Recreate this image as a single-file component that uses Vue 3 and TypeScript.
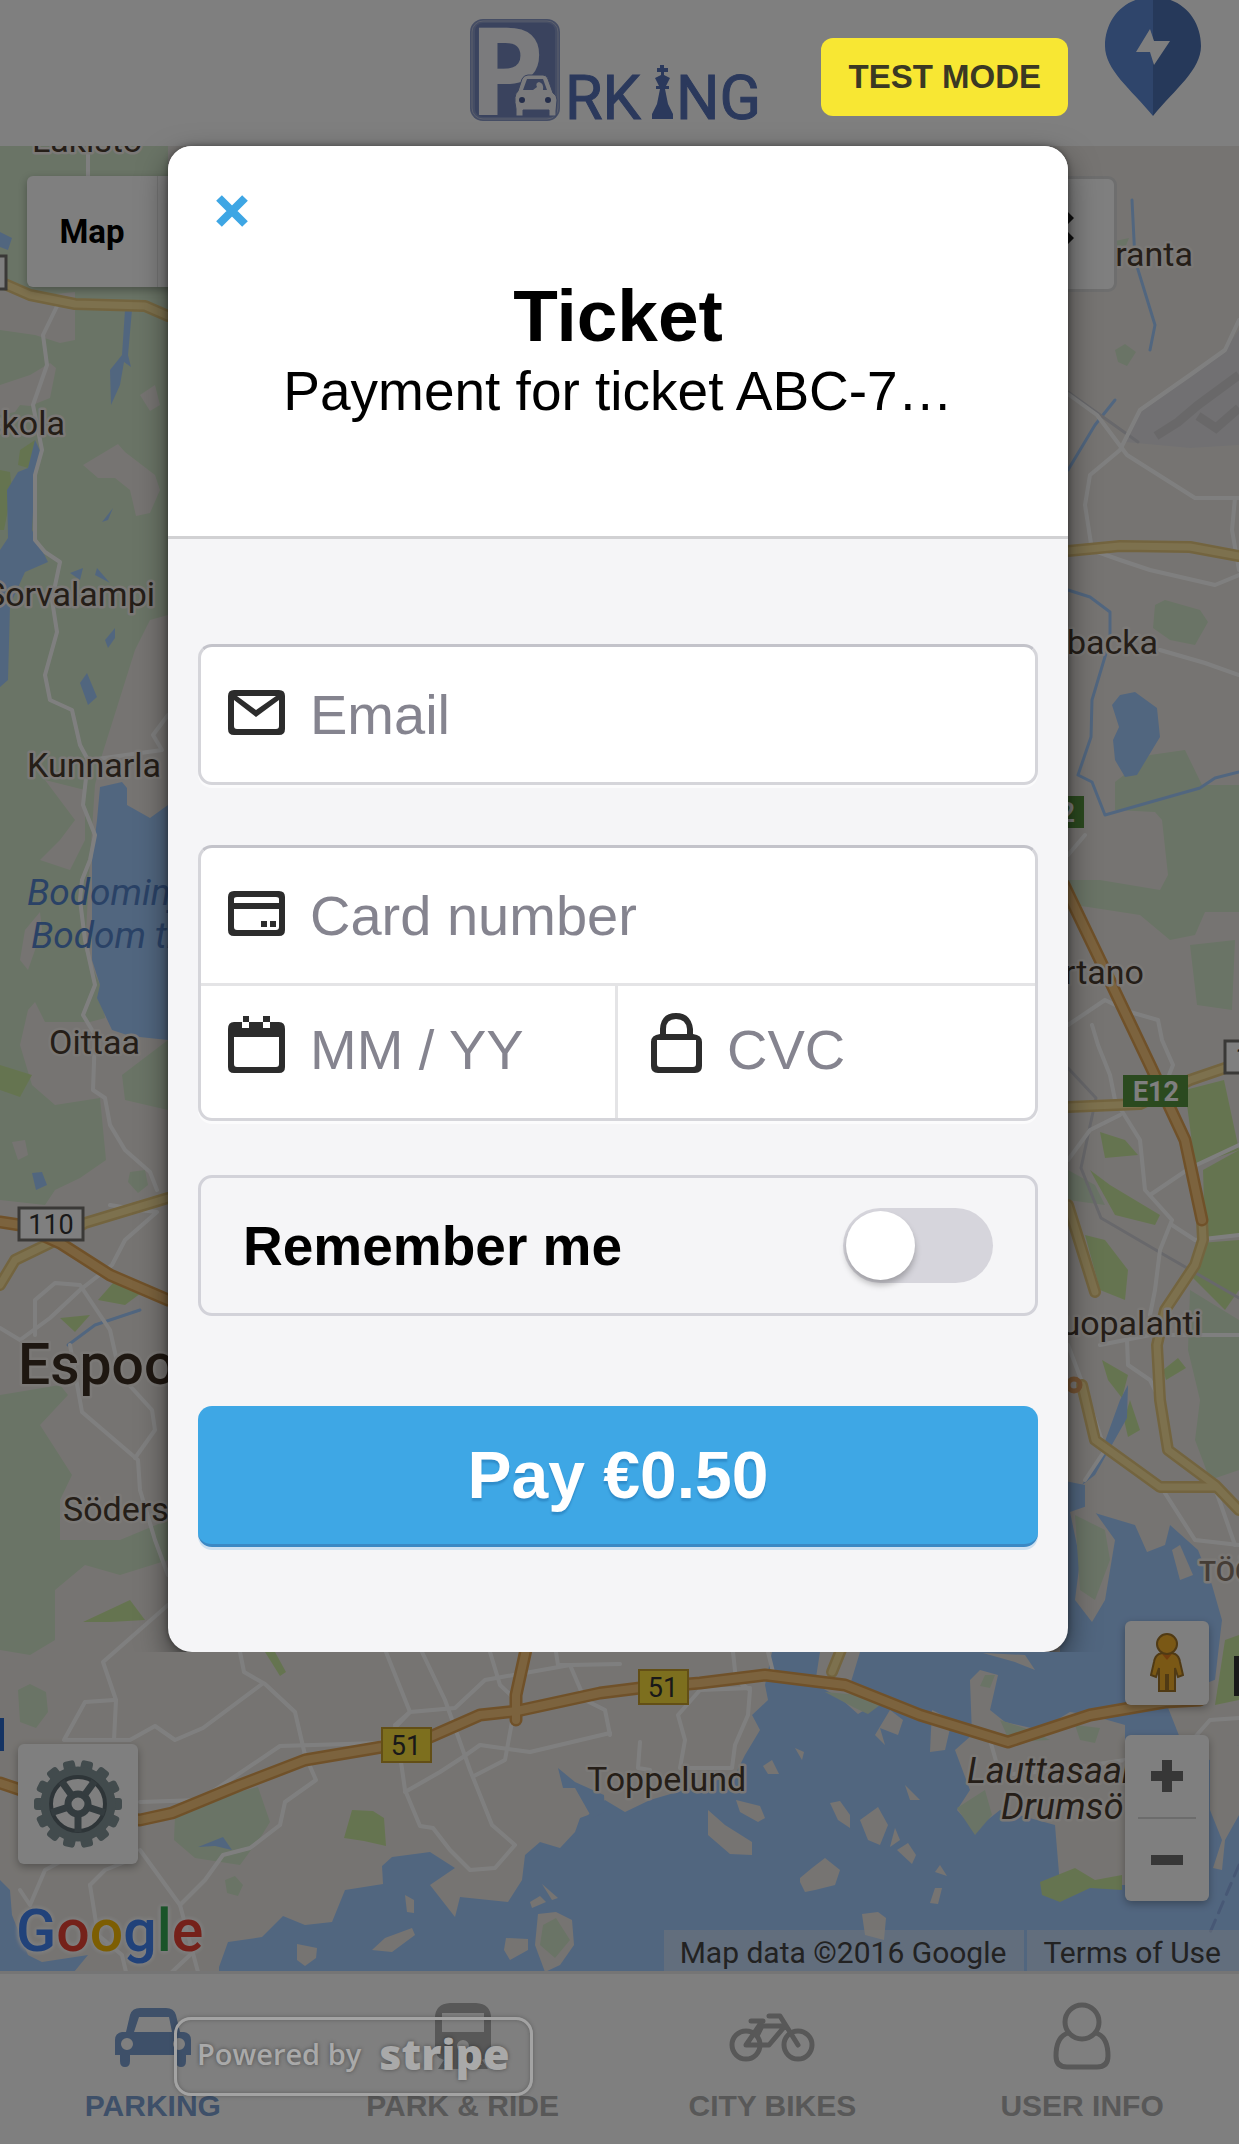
<script setup lang="ts">
import { ref } from 'vue'

interface Place {
  name: string
  x: number
  y: number
  kind?: 'town' | 'water' | 'city' | 'district' | 'area'
}

interface Tab {
  id: string
  label: string
}

const email = ref('')
const cardNumber = ref('')
const expiry = ref('')
const cvc = ref('')
const remember = ref(false)
const activeTab = ref('parking')

const tabs: Tab[] = [
  { id: 'parking', label: 'PARKING' },
  { id: 'ride', label: 'PARK & RIDE' },
  { id: 'bikes', label: 'CITY BIKES' },
  { id: 'user', label: 'USER INFO' },
]

const places: Place[] = [
  { name: 'Lakisto', x: 32, y: 152 },
  { name: 'Kunnarla', x: 27, y: 777 },
  { name: 'Bodominjärvi', x: 27, y: 905, kind: 'water' },
  { name: 'Bodom träsk', x: 31, y: 948, kind: 'water' },
  { name: 'Oittaa', x: 49, y: 1054 },
  { name: 'Espoo', x: 18, y: 1384, kind: 'city' },
  { name: 'Söderskog', x: 63, y: 1521 },
  { name: 'Toppelund', x: 587, y: 1791 },
  { name: 'Lauttasaari', x: 967, y: 1783, kind: 'area' },
  { name: 'Drumsö', x: 1001, y: 1819, kind: 'area' },
  { name: 'TÖÖLÖ', x: 1199, y: 1581, kind: 'district' },
]

const placesEnd: Place[] = [
  { name: 'Niskola', x: 65, y: 435 },
  { name: 'Sorvalampi', x: 155, y: 606 },
  { name: 'Seutula ranta', x: 1193, y: 266 },
  { name: 'Kivibacka', x: 1158, y: 654 },
  { name: 'Kaivartano', x: 1144, y: 984 },
  { name: 'Huopalahti', x: 1202, y: 1335 },
]

const woods: string[] = [
  '0,146 168,146 168,615 150,620 135,650 102,755 95,785 90,860 85,950 100,985 105,1018 90,1022 45,1022 35,1002 28,1010 20,1045 32,1085 55,1105 100,1098 106,1160 80,1178 55,1190 45,1205 0,1200',
  '122,1075 168,1040 168,1110 125,1100',
  '130,1172 145,1170 148,1185 138,1193 128,1182',
  '0,1395 60,1385 68,1395 40,1425 72,1475 60,1500 60,1540 120,1540 168,1520 168,1560 120,1575 85,1565 55,1590 55,1640 30,1655 0,1650',
  '18,1690 30,1684 46,1692 48,1712 36,1728 20,1722',
  '175,1815 205,1800 258,1787 270,1822 262,1835 240,1865 195,1858 174,1840',
  '225,1880 235,1876 243,1885 238,1896 227,1893',
  '1115,350 1125,344 1136,352 1127,366 1118,362',
  '1092,246 1129,238 1125,248 1115,248',
  '1155,605 1165,600 1200,610 1208,622 1195,645 1170,640 1153,628',
  '1115,782 1150,755 1185,750 1202,785 1239,785 1239,912 1205,912 1195,935 1170,940 1140,915 1075,905 1065,880 1100,880 1160,890 1168,875 1162,820 1155,812 1115,810',
  '1190,945 1235,940 1232,1010 1197,1005',
  '1068,1170 1095,1185 1105,1205 1068,1200',
  '1190,1290 1239,1320 1239,1470 1210,1480 1195,1440 1200,1400 1188,1350',
]

const parks: string[] = [
  '20,450 35,440 36,452 28,468 18,465',
  '0,470 10,472 12,490 4,530 0,530',
  '0,1065 32,1075 20,1097 0,1090',
  '98,1300 120,1275 145,1290 125,1305',
  '60,1318 90,1315 75,1332',
  '83,1622 130,1600 145,1620 110,1622',
  '265,1652 275,1652 286,1672 280,1676',
  '352,1810 373,1811 384,1818 386,1846 364,1841 344,1838',
  '1185,1090 1224,1080 1239,1150 1195,1165',
  '1203,1170 1239,1150 1239,1235 1205,1238',
  '1200,1243 1239,1240 1239,1290 1225,1310 1190,1275',
  '1090,1170 1110,1185 1160,1215 1155,1225 1115,1215',
  '1100,1132 1125,1140 1138,1155 1105,1158',
  '1085,1235 1105,1240 1128,1270 1125,1300 1100,1290',
  '1102,1360 1128,1375 1122,1398 1108,1380',
  '1130,1400 1140,1430 1128,1437 1124,1420',
  '1163,1370 1178,1358 1186,1368 1166,1380',
]

const clearings: string[] = [
  '0,290 45,295 75,292 75,340 60,343 35,335 0,330',
  '0,385 30,375 50,363 56,368 50,398 30,406 20,405 15,412 0,415',
  '83,465 118,444 125,452 155,475 160,490 150,513 136,516 130,490 115,478 98,478',
  '140,395 155,385 160,405 150,411',
  '45,780 85,790 85,840 70,870 40,860 60,840 75,820',
  '20,960 25,930 40,912 42,930 28,970',
  '12,1142 25,1140 28,1155 18,1160',
]

const waters: string[] = [
  '35,440 42,455 35,475 32,530 48,562 25,572 10,605 8,680 0,687 0,550 8,538 7,490 18,472 28,468',
  '125,310 132,310 128,355 131,367 124,362 120,385 111,405 110,370 122,355',
  '0,232 12,238 8,250 0,247',
  '102,522 113,508 108,520',
  '70,573 83,568 80,580',
  '95,575 97,568 110,583',
  '105,640 115,628 115,638 108,648',
  '80,683 87,673 97,697 88,705',
  '100,787 122,782 127,788 127,805 150,818 168,805 168,1040 130,1036 112,1030 105,1015 97,998 100,985 92,960 92,860 97,820',
  '32,1173 42,1172 47,1185 36,1190',
  '1112,705 1120,695 1135,692 1157,708 1160,737 1137,775 1125,777 1115,760 1113,740 1119,727',
  '198,1847 223,1837 232,1850 215,1846',
  '0,1880 10,1890 12,1915 28,1955 42,1962 88,1955 74,1972 0,1972',
  '1120,1400 1128,1385 1127,1418 1095,1475 1082,1485 1100,1455',
  '219,1967 228,1942 262,1937 283,1916 305,1925 332,1922 345,1890 383,1884 382,1866 392,1857 430,1852 455,1868 430,1885 455,1917 460,1897 508,1902 522,1880 525,1855 540,1842 560,1848 575,1832 580,1818 588,1815 605,1800 625,1812 650,1800 735,1775 745,1755 760,1730 752,1715 768,1700 765,1685 772,1652 820,1652 1060,1652 1060,1480 1085,1485 1085,1510 1135,1525 1147,1552 1165,1545 1170,1525 1198,1550 1212,1585 1222,1620 1215,1680 1180,1735 1165,1745 1210,1760 1239,1740 1239,1972 219,1972',
  '558,1768 575,1782 604,1795 605,1812 592,1818 575,1788 563,1788',
]

const islands: string[] = [
  '970,1680 980,1670 998,1675 990,1710 1005,1722 1040,1730 1070,1712 1090,1715 1125,1725 1125,1885 1060,1885 1055,1825 1000,1810 975,1830 957,1810 970,1790 955,1750 972,1735',
  '820,1652 860,1652 850,1685 868,1708 858,1714 840,1698 815,1684',
  '890,1710 903,1720 898,1735 880,1728 885,1745 875,1735',
  '932,1710 952,1720 945,1750 930,1752',
  '708,1810 725,1825 752,1842 752,1855 730,1854 708,1835',
  '736,1800 760,1806 765,1818 758,1822 740,1812',
  '763,1766 772,1760 779,1774 768,1774',
  '795,1748 804,1752 802,1760',
  '830,1803 840,1801 850,1815 850,1828 838,1820',
  '860,1820 878,1807 888,1825 880,1845 868,1840',
  '895,1828 900,1840 890,1847',
  '905,1785 920,1800 910,1800',
  '897,1850 908,1843 916,1855 912,1864',
  '800,1878 812,1868 825,1858 840,1870 835,1885 815,1890 805,1892 800,1882',
  '935,1872 940,1865 947,1876',
  '935,1888 942,1888 938,1904 930,1903',
  '862,1914 878,1912 886,1918 884,1940 865,1935',
  '405,1895 414,1900 414,1913 407,1912',
  '372,1950 385,1938 412,1928 415,1935 392,1952',
  '297,1944 317,1948 316,1958 305,1966 297,1960',
  '538,1914 556,1912 572,1920 574,1945 560,1965 545,1972 535,1945',
  '506,1938 528,1939 528,1950 510,1960 504,1950',
  '542,1884 558,1898 552,1900',
  '530,1902 540,1896 546,1902 532,1908',
  '983,1653 1025,1655 1035,1670 1015,1662',
  '1070,1512 1090,1505 1115,1540 1105,1600 1092,1622 1075,1600 1080,1560',
  '1172,1550 1180,1545 1193,1575 1180,1580',
  '1165,1700 1239,1670 1239,1745 1215,1755 1180,1738',
  '1225,1840 1239,1815 1239,1745 1210,1752 1210,1810 1222,1840 1213,1868 1222,1870',
]

const islandWoods: string[] = [
  '543,1925 556,1918 570,1940 555,1958 540,1945',
  '957,1808 985,1790 992,1815 975,1835',
  '985,1675 995,1675 990,1688 980,1686',
  '1000,1720 1030,1730 1050,1740 1010,1742',
  '1075,1725 1100,1728 1095,1743 1080,1740',
  '1075,1515 1105,1530 1110,1560 1095,1600 1080,1590',
  '825,1692 860,1695 880,1705 868,1714 855,1708',
]

const islandParks: string[] = [
  '1040,1882 1075,1868 1095,1880 1122,1875 1122,1890 1090,1888 1060,1902 1042,1895',
  '1225,1640 1239,1635 1239,1700 1215,1705',
]

const smallRoads: string[] = [
  '88,146 88,180',
  '60,300 43,335 47,365 33,405 42,450 35,475 35,540 45,552 60,562 52,600 57,632 45,675 50,700 72,710 80,745 88,760 83,805 95,835 90,860 82,880 80,900 85,940 95,985 83,1015 95,1035 93,1090 105,1098 110,1125 125,1150 150,1172 157,1190',
  '168,715 153,735 162,750 90,760',
  '35,1335 35,1300 55,1283 80,1285 110,1330 120,1375 152,1410 155,1430 135,1458',
  '0,1328 20,1340 50,1318 80,1290 112,1265 125,1240 157,1212 140,1210 110,1205',
  '70,1345 82,1412 138,1460 140,1490 155,1540 168,1575',
  '168,1605 103,1662 116,1700 114,1740',
  '114,1700 85,1702 64,1740 110,1740 130,1740 155,1726 175,1740 203,1728 262,1684',
  '240,1652 244,1672 265,1684 295,1712 305,1755 316,1780 285,1802 280,1825 250,1848 223,1855 205,1880 180,1905 140,1850',
  '140,1802 200,1800 280,1746 380,1743 410,1712 455,1708 485,1680 570,1665 620,1664',
  '386,1652 410,1712 395,1725',
  '422,1652 445,1700 470,1770 492,1825 515,1845 495,1868 470,1870 450,1850 433,1828 420,1826 405,1790 401,1762',
  '405,1792 440,1772 463,1757 480,1745 530,1752 610,1733',
  '490,1652 500,1685 516,1700 505,1760 474,1776',
  '556,1652 558,1665 570,1665 585,1700 605,1710 610,1735',
  '20,1890 30,1905 45,1870 60,1862',
  '90,1885 105,1870 135,1858',
  '90,1885 98,1935 122,1955 126,1972',
  '180,1905 198,1972',
  '190,1955 172,1972',
  '733,1652 736,1680 750,1690 748,1715 735,1745 732,1768 680,1768 685,1740 678,1715 700,1690 750,1688',
  '640,1742 638,1768 650,1770',
  '768,1652 773,1672',
  '1068,394 1097,415 1127,455 1195,498 1239,498',
  '1239,320 1225,350 1190,375 1140,410 1120,450 1090,475 1085,505 1092,550 1120,560 1150,570 1215,585 1239,575',
  '1235,498 1232,530 1239,570',
  '1160,650 1205,663 1239,675',
  '1068,855 1085,835',
  '1068,1025 1105,1000 1130,1012 1158,1020 1162,1040 1173,1065 1165,1085',
  '1092,1025 1098,1045 1110,1075 1115,1100 1140,1140 1145,1190 1172,1220 1160,1250 1155,1290 1150,1315',
  '1068,1160 1090,1130 1120,1115',
  '1150,1195 1190,1168 1239,1145',
  '1172,1225 1195,1240 1239,1235',
  '1100,1345 1150,1335 1239,1335',
  '1068,1345 1085,1390 1105,1450 1085,1480',
  '1127,1340 1128,1365 1150,1380 1160,1400',
  '1163,1490 1195,1540 1239,1545',
  '1215,1488 1235,1545',
  '1188,1745 1210,1720 1239,1718',
  '990,1740 1000,1775 1060,1770 1125,1760',
]

const yellowRoads: string[] = [
  '0,282 30,295 75,304 145,306 168,316',
  '0,1285 15,1260 50,1243 85,1223 168,1198',
  '1068,551 1120,546 1190,547 1239,556',
  '1068,1107 1140,1104 1190,1080 1228,1067',
  '1068,1205 1095,1292',
  '1202,1220 1203,1240 1195,1265 1165,1310 1157,1345 1160,1400 1168,1450 1215,1485 1239,1510',
  '1082,1385 1095,1440 1160,1487 1215,1487',
  '845,1640 832,1672',
]

const orangeRoads: string[] = [
  '0,1222 20,1225 60,1243 110,1275 168,1300',
  '0,1783 30,1793 80,1815 140,1820 172,1813 240,1785 305,1760 382,1747 430,1737 480,1715 517,1711 600,1693 640,1688 700,1683 765,1675 845,1685 920,1715 1008,1742 1090,1715 1165,1702 1200,1700',
  '1064,885 1100,960 1150,1065 1185,1140 1202,1220',
  '527,1645 516,1695 516,1720',
]

const streams: string[] = [
  '1068,590 1090,597 1110,612 1110,640 1092,700 1091,737 1078,775 1092,782 1105,815 1140,805 1200,788 1215,778 1239,772',
  '1132,200 1135,260 1155,325 1150,350',
  '1068,470 1095,425 1115,400',
  '68,1345 95,1325 140,1310',
]
</script>

<template>
  <div class="page">
    <header class="top">
      <svg class="logo" viewBox="0 0 290 104" role="img" aria-label="Parking">
        <rect x="1" y="1" width="90" height="102" rx="13" fill="#8a9ac8" />
        <rect x="3" y="3" width="86" height="98" rx="11" fill="none" stroke="#b8c0da" stroke-width="1" />
        <rect x="6" y="5" width="80" height="94" rx="8" fill="#7486bd" />
        <text x="-1" y="97" class="sign-letter">P</text>
        <path d="M53 61q2-4 6-4h15q4 0 5 4l5 14q4 2 4 7l-1 11v5h-7v-6H54v6h-7v-7q-3-14 2-18z" fill="#f6f7fb" stroke="#7486bd" stroke-width="1" />
        <path d="M54 72l4-11h16l4 11h-4q1-7-4-8-4 1-2 5l-4 3z" fill="#7486bd" />
        <circle cx="53" cy="82" r="3" fill="#4a5c96" />
        <circle cx="79" cy="82" r="3" fill="#4a5c96" />
        <text x="96" y="101" class="logo-text">RK</text>
        <path d="M191 47h4v3h4v4h-4v3l6 3-4 8h3v3h-4l3 15 5 10v5h-21v-5l5-10 3-15h-4v-3h3l-4-8 6-3v-3h-4v-4h3z" fill="#5672b8" />
        <text x="207" y="101" class="logo-text">NG</text>
      </svg>
      <svg class="pin" viewBox="0 0 98 116" aria-hidden="true">
        <path d="M49-3C20-3 1 19 1 46c0 24 26 43 48 70z" fill="#5e8ad6" />
        <path d="M49-3c29 0 48 22 48 49 0 24-26 43-48 70z" fill="#4c72b4" />
        <path d="M46 29L32 52h14l4 13 16-24H50z" fill="#fff" />
      </svg>
    </header>

    <main class="map">
      <svg class="canvas" viewBox="0 146 1239 1825" preserveAspectRatio="xMidYMid slice" aria-label="Map">
        <rect x="0" y="146" width="1239" height="1826" fill="#ede9e4" />
        <polygon v-for="p in woods" :key="p" :points="p" fill="#d4e8cc" />
        <polygon v-for="p in clearings" :key="p" :points="p" fill="#ede9e4" />
        <polygon v-for="p in parks" :key="p" :points="p" fill="#cbe8a0" />
        <polygon points="1125,442 1140,410 1190,377 1225,350 1239,330 1239,445 1190,448" fill="#e2e1e4" />
        <path d="M1156 436l22-14 20-17 41-30M1198 416l18 12 23-20" fill="none" stroke="#d3d0d3" stroke-width="9" />
        <polygon v-for="p in waters" :key="p" :points="p" fill="#a3ccff" />
        <polygon v-for="p in islands" :key="p" :points="p" fill="#ede9e4" />
        <polygon v-for="p in islandWoods" :key="p" :points="p" fill="#d4e8cc" />
        <polygon v-for="p in islandParks" :key="p" :points="p" fill="#cbe8a0" />
        <g fill="none" stroke-linejoin="round" stroke-linecap="round">
          <polyline v-for="p in streams" :key="p" :points="p" stroke="#a3ccff" stroke-width="3" />
          <path d="M1068 1068l28 30-15 70 20 50 60 35 78 45M1068 392l70 50" stroke="#d0d0d6" stroke-width="3" />
          <polyline v-for="p in smallRoads" :key="p" :points="p" stroke="#fff" stroke-width="4" />
          <polyline v-for="p in yellowRoads" :key="p" :points="p" stroke="#e6c97e" stroke-width="12" />
          <polyline v-for="p in yellowRoads" :key="p + 'in'" :points="p" stroke="#fbe29c" stroke-width="7" />
          <polyline v-for="p in orangeRoads" :key="p" :points="p" stroke="#e0a353" stroke-width="13" />
          <polyline v-for="p in orangeRoads" :key="p + 'in'" :points="p" stroke="#f8c77c" stroke-width="8" />
          <circle cx="1074" cy="1385" r="6" stroke="#e9a667" stroke-width="5" />
          <path d="M1239 1865l-30 70" stroke="#8fb0ea" stroke-width="3" stroke-dasharray="12 8" />
        </g>
        <g class="shields">
          <rect x="19" y="1208" width="64" height="32" fill="#fff" stroke="#75736f" stroke-width="3" />
          <text x="51" y="1234">110</text>
          <rect x="-20" y="256" width="26" height="33" fill="#fff" stroke="#75736f" stroke-width="3" />
          <rect x="1225" y="1041" width="60" height="32" fill="#fff" stroke="#75736f" stroke-width="3" />
          <text x="1243" y="1067">1</text>
          <rect x="382" y="1728" width="49" height="34" fill="#fbdf3c" stroke="#c79f2c" stroke-width="2" />
          <text x="406" y="1755">51</text>
          <rect x="639" y="1670" width="49" height="34" fill="#fbdf3c" stroke="#c79f2c" stroke-width="2" />
          <text x="663" y="1697">51</text>
          <rect x="1020" y="796" width="64" height="32" fill="#56943e" />
          <text x="1052" y="822" class="light">E12</text>
          <rect x="1123" y="1075" width="65" height="32" fill="#56943e" />
          <text x="1156" y="1101" class="light">E12</text>
          <rect x="-10" y="1718" width="14" height="33" fill="#2a68c8" />
          <rect x="1234" y="1656" width="8" height="40" fill="#333" />
        </g>
        <text v-for="p in places" :key="p.name" :x="p.x" :y="p.y" class="place" :class="p.kind">{{ p.name }}</text>
        <text v-for="p in placesEnd" :key="p.name" :x="p.x" :y="p.y" class="place end">{{ p.name }}</text>
      </svg>

      <div class="map-bar">
        <div class="map-types">
          <button type="button" class="active">Map</button>
          <button type="button">Satellite</button>
        </div>
        <div class="area-select">
          <select aria-label="Area">
            <option>Helsinki</option>
          </select>
          <svg width="30" height="40" viewBox="0 0 30 40" aria-hidden="true">
            <path d="M15-11L30 4l-6 6H6L0 4zM6 18h18l6 6-15 15L0 24z" fill="#222" />
          </svg>
        </div>
      </div>

      <div class="map-controls">
        <button type="button" aria-label="Street view" class="ctl pegman">
          <svg width="34" height="60" viewBox="0 0 34 60" aria-hidden="true">
            <path d="M9 21q8-3 16 0 4 2 5 8l3 13-5 2-3-9v23h-7V42h-2v16H9V35l-3 9-5-2 3-13q1-6 5-8z" fill="#f5b02a" stroke="#a07428" stroke-width="2" />
            <path d="M12 21h10l-5 6z" fill="#e57a1c" />
            <circle cx="17" cy="11" r="10" fill="#f5b02a" stroke="#a07428" stroke-width="2" />
          </svg>
        </button>
        <div class="zoom">
          <button type="button" aria-label="Zoom in" class="ctl">
            <svg width="32" height="32" viewBox="0 0 32 32" aria-hidden="true"><path d="M11 0h10v11h11v10H21v11H11V21H0V11h11z" fill="#6e6e6e" /></svg>
          </button>
          <hr />
          <button type="button" aria-label="Zoom out" class="ctl">
            <svg width="32" height="32" viewBox="0 0 32 32" aria-hidden="true"><path d="M0 11h32v10H0z" fill="#6e6e6e" /></svg>
          </button>
        </div>
      </div>

      <button type="button" class="settings" aria-label="Settings">
        <svg width="90" height="90" viewBox="-45 -45 90 90" aria-hidden="true">
          <g fill="#84969a">
            <rect v-for="n in 14" :key="n" x="-6" y="-44" width="12" height="14" rx="3" :transform="`rotate(${(n - 0.5) * 360 / 14})`" />
          </g>
          <circle r="32" fill="none" stroke="#84969a" stroke-width="11" />
          <circle r="27" fill="none" stroke="#5c6a70" stroke-width="4" />
          <circle r="10" fill="none" stroke="#68787e" stroke-width="7" />
          <path v-for="n in 5" :key="n" d="M0 11V28" stroke="#68787e" stroke-width="7" :transform="`rotate(${n * 72})`" />
        </svg>
      </button>

      <div class="google" aria-label="Google">
        <span class="b">G</span><span class="r">o</span><span class="y">o</span><span class="b">g</span><span class="g">l</span><span class="r">e</span>
      </div>

      <div class="credits">
        <span>Map data ©2016 Google</span>
        <a href="#terms">Terms of Use</a>
      </div>
    </main>

    <nav class="tabs">
      <a v-for="t in tabs" :key="t.id" :href="'#' + t.id" :class="{ active: activeTab === t.id }" @click="activeTab = t.id">
        <svg v-if="t.id === 'parking'" width="76" height="68" viewBox="0 0 76 68" aria-hidden="true">
          <path fill-rule="evenodd" d="M25 6h26q8 0 10 7l4 17h4q7 1 7 8v15h-5v6q0 6-5 6t-5-6v-6H15v6q0 6-5 6t-5-6v-6H0V38q0-7 7-8h4l4-17q2-7 10-7zm-1 9l-5 15h38l-3-15zM12 36a6 6 0 1 0 0 12 6 6 0 0 0 0-12zm52 0a6 6 0 1 0 0 12 6 6 0 0 0 0-12z" fill="currentColor" />
        </svg>
        <svg v-else-if="t.id === 'ride'" width="58" height="68" viewBox="0 0 58 68" aria-hidden="true">
          <path fill-rule="evenodd" d="M16 1h26q15 1 15 15v28q0 12-9 14l6 9H4l6-9q-9-2-9-14V16Q1 2 16 1zM8 11v19h42V11zm21 27a6 6 0 1 0 0 12 6 6 0 0 0 0-12zM14 58l-4 5h8l-2-5zm28 0l-2 5h8l-4-5z" fill="currentColor" />
        </svg>
        <svg v-else-if="t.id === 'bikes'" width="86" height="68" viewBox="0 0 86 68" aria-hidden="true">
          <g fill="none" stroke="currentColor" stroke-width="5" stroke-linecap="round" stroke-linejoin="round">
            <circle cx="17" cy="43" r="14" />
            <circle cx="69" cy="43" r="14" />
            <path d="M22 19h12M40 14h11l18 29M30 24h26L40 43H17l15-22M32 26l-4 8" />
          </g>
        </svg>
        <svg v-else width="58" height="68" viewBox="0 0 58 68" aria-hidden="true">
          <g fill="none" stroke="currentColor" stroke-width="5">
            <ellipse cx="29" cy="20" rx="17" ry="17" />
            <path d="M15 31Q3 35 3 54q0 11 11 11h30q11 0 11-11 0-19-12-23" />
          </g>
        </svg>
        <span>{{ t.label }}</span>
      </a>
    </nav>

    <div class="overlay">
      <span class="test-mode">TEST MODE</span>
      <form class="dialog" role="dialog" aria-labelledby="dialog-title" @submit.prevent>
        <header class="dialog-head">
          <button type="button" class="close" aria-label="Close">
            <svg width="34" height="34" viewBox="0 0 34 34" aria-hidden="true">
              <path d="M4 4l26 26M30 4L4 30" stroke="#3ea6e4" stroke-width="8" />
            </svg>
          </button>
          <h1 id="dialog-title">Ticket</h1>
          <p>Payment for ticket ABC-7…</p>
        </header>

        <div class="dialog-body">
          <label class="field box">
            <svg class="icon" viewBox="0 0 57 80" aria-hidden="true">
              <path fill-rule="evenodd" d="M6 15h45q6 0 6 6v33q0 6-6 6H6q-6 0-6-6V21q0-6 6-6zm3 6l19 14 20-14zM6 25v26q0 3 3 3h39q3 0 3-3V25L28 42z" fill="#2c2c2c" />
            </svg>
            <input v-model="email" type="email" placeholder="Email" aria-label="Email" />
          </label>

          <div class="card box">
            <label class="field">
              <svg class="icon" viewBox="0 0 57 80" aria-hidden="true">
                <path fill-rule="evenodd" d="M6 15h45q6 0 6 6v33q0 6-6 6H6q-6 0-6-6V21q0-6 6-6zm3 6q-3 0-3 2v4h45v-4q0-2-3-2zM6 33v18q0 3 3 3h39q3 0 3-3V33z" fill="#2c2c2c" />
                <path d="M33 45h6v6h-6zm9 0h6v6h-6z" fill="#2c2c2c" />
              </svg>
              <input v-model="cardNumber" type="text" inputmode="numeric" placeholder="Card number" aria-label="Card number" />
            </label>
            <div class="card-row">
              <label class="field">
                <svg class="icon" viewBox="0 -3 57 80" aria-hidden="true">
                  <path fill-rule="evenodd" d="M6 9h8v6h7V9h14v6h7V9h9q6 0 6 7v38q0 6-6 6H6q-6 0-6-6V16q0-7 6-7zm0 15v27q0 3 3 3h39q3 0 3-3V24z" fill="#2c2c2c" />
                  <path d="M15 3h6v6h-6zm20 0h7v6h-7z" fill="#2c2c2c" />
                </svg>
                <input v-model="expiry" type="text" inputmode="numeric" placeholder="MM / YY" aria-label="Expiry date" />
              </label>
              <label class="field">
                <svg class="icon" viewBox="0 -3 57 80" aria-hidden="true">
                  <path fill-rule="evenodd" d="M15 21v-5Q16 0 31 0t17 16v5q9 1 9 8v24q0 7-7 7H13q-7 0-7-7V29q0-7 9-8zm6 0h21v-5q-1-10-11-10t-10 10zM12 27v24q0 3 3 3h33q3 0 3-3V27z" fill="#2c2c2c" />
                </svg>
                <input v-model="cvc" type="text" inputmode="numeric" placeholder="CVC" aria-label="CVC" />
              </label>
            </div>
          </div>

          <label class="remember">
            <span>Remember me</span>
            <input v-model="remember" type="checkbox" />
          </label>

          <button type="submit" class="pay">Pay €0.50</button>
        </div>
      </form>

      <a class="powered" href="#stripe">Powered by <strong>stripe</strong></a>
    </div>
  </div>
</template>

<style>
body {
  margin: 0;
}
</style>

<style scoped>
* {
  box-sizing: border-box;
}

.page {
  position: relative;
  display: flex;
  flex-direction: column;
  min-height: 100vh;
  overflow: hidden;
  background: #fff;
  font-family: "Liberation Sans", Arial, sans-serif;
}

button {
  margin: 0;
  padding: 0;
  border: 0;
  font-family: inherit;
  cursor: pointer;
}

.top {
  position: relative;
  display: flex;
  justify-content: center;
  height: 146px;
  padding: 18px 12px 0 0;
}

.logo {
  width: 290px;
  height: 104px;
  overflow: visible;
}

.sign-letter {
  font: 700 122px "Open Sans", sans-serif;
  fill: #f6f7fb;
}

.logo-text {
  font: 400 61px Roboto, sans-serif;
  fill: #5672b8;
  stroke: #5672b8;
  stroke-width: 1;
}

.pin {
  position: absolute;
  top: 0;
  right: 37px;
  width: 98px;
  height: 116px;
}

.map {
  position: relative;
  flex: 1;
  display: flex;
  flex-direction: column;
  font-family: Roboto, sans-serif;
}

.canvas {
  position: absolute;
  inset: 0;
  width: 100%;
  height: 100%;
}

.place {
  font: 400 34px Roboto, sans-serif;
  fill: #4a3c30;
  stroke: #f6f2ee;
  stroke-width: 5;
  stroke-linejoin: round;
  paint-order: stroke;
}

.place.end {
  text-anchor: end;
}

.place.water {
  font-style: italic;
  font-size: 37px;
  fill: #5585cc;
  stroke: none;
}

.place.city {
  font-size: 57px;
  font-weight: 500;
  fill: #3c2f22;
}

.place.district {
  font-size: 28px;
  font-weight: 500;
  fill: #8a7a6c;
}

.place.area {
  font-size: 36px;
  font-style: italic;
}

.shields text {
  font: 400 27px Roboto, sans-serif;
  text-anchor: middle;
  fill: #333;
}

.shields .light {
  font-weight: 700;
  fill: #fff;
}

.map-bar {
  position: relative;
  display: flex;
  justify-content: space-between;
  margin: 30px 122px 0 27px;
}

.map-types {
  display: flex;
  height: 111px;
  border-radius: 6px;
  background: #fff;
  box-shadow: 0 3px 9px rgba(0, 0, 0, 0.3);
}

.map-types button {
  width: 130px;
  background: none;
  font-size: 33px;
  color: #565656;
}

.map-types button + button {
  width: 180px;
  border-left: 1px solid #e6e6e6;
}

.map-types .active {
  font-weight: 700;
  color: #000;
}

.area-select {
  display: flex;
  align-items: center;
  width: 400px;
  height: 116px;
  padding-right: 40px;
  border: 3px solid #dcdcdc;
  border-radius: 9px;
  background: #fff;
}

.area-select svg {
  overflow: visible;
}

.area-select select {
  flex: 1;
  padding: 0 24px;
  border: 0;
  appearance: none;
  background: none;
  font: 32px Roboto, sans-serif;
}

.map-controls {
  position: absolute;
  right: 30px;
  bottom: 70px;
  display: flex;
  flex-direction: column;
  gap: 30px;
  width: 84px;
}

.ctl {
  display: flex;
  align-items: center;
  justify-content: center;
  width: 100%;
  height: 82px;
  background: none;
}

.pegman,
.zoom,
.settings {
  border-radius: 6px;
  background: #fff;
  box-shadow: 0 3px 9px rgba(0, 0, 0, 0.3);
}

.pegman {
  height: 84px;
}

.zoom hr {
  height: 2px;
  margin: 0 13px;
  border: 0;
  background: #d8d8d8;
}

.settings {
  position: absolute;
  left: 18px;
  bottom: 107px;
  display: flex;
  align-items: center;
  justify-content: center;
  width: 120px;
  height: 120px;
}

.google {
  position: absolute;
  left: 16px;
  bottom: 0;
  display: flex;
  font-size: 59px;
  font-weight: 500;
  line-height: 80px;
  text-shadow: 0 0 5px #fff, 0 0 5px #fff, 0 0 5px #fff;
}

.google .b {
  color: #4285f4;
}

.google .r {
  color: #ea4335;
}

.google .y {
  color: #fbbc05;
}

.google .g {
  color: #34a853;
}

.credits {
  position: absolute;
  right: 0;
  bottom: 0;
  display: flex;
  gap: 3px;
  font-size: 30px;
  line-height: 37px;
  color: #444;
}

.credits > * {
  padding: 4px 18px 0 16px;
  background: rgba(245, 245, 245, 0.4);
}

.credits a {
  color: inherit;
  text-decoration: none;
}

.tabs {
  display: flex;
  height: 173px;
  border-top: 3px solid #ebebeb;
  background: #fff;
}

.tabs a {
  flex: 1;
  display: flex;
  flex-direction: column;
  align-items: center;
  gap: 18px;
  padding: 28px 4px 0 0;
  color: #b0b0b0;
  font-size: 30px;
  font-weight: 700;
  line-height: 36px;
  text-decoration: none;
}

.tabs a.active {
  color: #7ca0d2;
}

.overlay {
  position: absolute;
  inset: 0;
  padding: 146px 171px 0 168px;
  background: rgba(0, 0, 0, 0.5);
}

.test-mode {
  position: absolute;
  top: 38px;
  right: 171px;
  padding: 0 27px;
  border-radius: 12px;
  background: #f8e733;
  color: #3b3923;
  font-size: 33px;
  font-weight: 700;
  line-height: 78px;
}

.dialog {
  border-radius: 24px;
  background: #f5f5f7;
  color: #000;
  box-shadow: 0 12px 30px rgba(0, 0, 0, 0.5), 0 0 6px rgba(0, 0, 0, 0.4);
  clip-path: inset(-60px -60px 0 -60px);
}

.dialog-head {
  padding: 40px 39px 112px;
  border-bottom: 3px solid #d1d1d3;
  border-radius: 24px 24px 0 0;
  background: #fff;
  text-align: center;
}

.close {
  display: flex;
  align-items: center;
  justify-content: center;
  width: 50px;
  height: 50px;
  margin-bottom: 38px;
  background: none;
}

.dialog-head h1 {
  margin: 0;
  font-size: 73px;
  line-height: 84px;
}

.dialog-head p {
  margin: 0;
  font-size: 55px;
  line-height: 66px;
}

.dialog-body {
  padding: 105px 30px;
}

.box {
  border: 3px solid #d5d5da;
  border-top-color: #c3c3ca;
  border-radius: 14px;
  background: #fff;
  box-shadow: 0 3px 0 rgba(255, 255, 255, 0.6);
}

.field {
  display: flex;
  align-items: center;
  gap: 25px;
  min-width: 0;
  height: 135px;
  padding-left: 27px;
}

.field.box {
  height: 141px;
  margin-bottom: 60px;
}

.icon {
  flex: none;
  width: 57px;
  height: 80px;
}

.field input {
  flex: 1;
  min-width: 0;
  padding: 0;
  border: 0;
  outline: 0;
  background: none;
  color: #000;
  font: 400 56px "Liberation Sans", Arial, sans-serif;
}

.field input::placeholder {
  color: #85848f;
  opacity: 1;
}

.card {
  margin-bottom: 54px;
}

.card-row {
  display: grid;
  grid-template-columns: 1fr 1fr;
  border-top: 3px solid #e4e4e6;
}

.card-row .field {
  height: 132px;
  padding-bottom: 5px;
}

.card-row .field:first-child {
  border-right: 3px solid #e4e4e6;
}

.remember {
  display: flex;
  align-items: center;
  justify-content: space-between;
  height: 141px;
  margin-bottom: 90px;
  padding: 0 42px;
  border: 3px solid #d2d2d9;
  border-radius: 14px;
  font-size: 55px;
  font-weight: 700;
}

.remember input {
  width: 150px;
  height: 75px;
  margin: 0;
  border-radius: 38px;
  appearance: none;
  background: #d6d5dc;
}

.remember input::before {
  content: "";
  display: block;
  width: 69px;
  height: 69px;
  margin: 3px;
  border-radius: 50%;
  background: #fff;
  box-shadow: 0 5px 6px rgba(0, 0, 0, 0.25);
}

.remember input:checked::before {
  margin-left: 78px;
}

.pay {
  display: block;
  width: 100%;
  height: 141px;
  border-bottom: 3px solid #3b88c4;
  border-radius: 14px;
  background: #3ea7e5;
  box-shadow: 0 3px 0 #cfe1f1;
  color: #fff;
  font-size: 66px;
  font-weight: 700;
  text-shadow: 0 3px 2px rgba(0, 60, 120, 0.25);
}

.powered {
  position: absolute;
  left: 174px;
  bottom: 48px;
  display: flex;
  align-items: center;
  gap: 18px;
  height: 79px;
  padding: 0 20px 5px;
  border: 3px solid #a3a3a3;
  border-radius: 17px;
  color: #a9a9a9;
  font: 600 29px/60px "Open Sans", sans-serif;
  text-decoration: none;
  text-shadow: 0 0 4px rgba(0, 0, 0, 0.4);
  box-shadow: 0 0 4px rgba(0, 0, 0, 0.25), inset 0 0 4px rgba(0, 0, 0, 0.25);
}

.powered strong {
  font-size: 43px;
  font-weight: 800;
}
</style>
